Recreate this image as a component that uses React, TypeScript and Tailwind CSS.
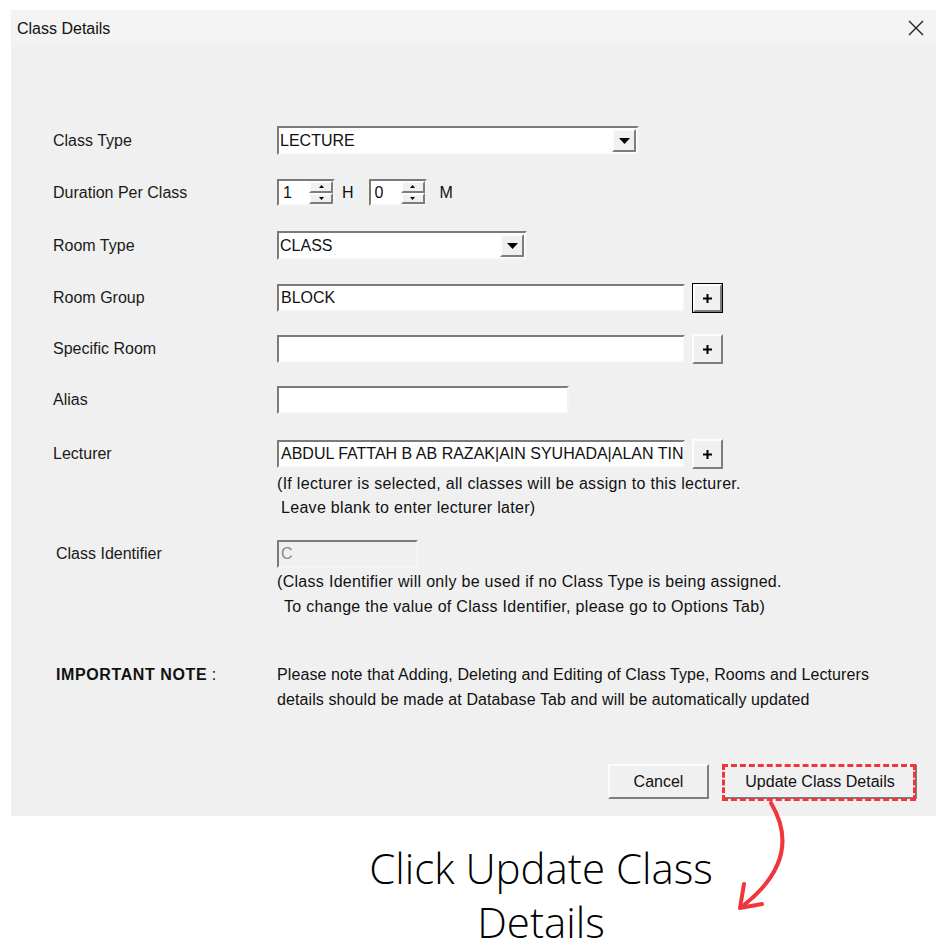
import React from "react";

const sunken =
  "border-2 border-t-[#7a7a7a] border-l-[#7a7a7a] border-b-[#f4f4f4] border-r-[#f4f4f4]";
const raised =
  "border-2 border-t-[#fcfcfc] border-l-[#fcfcfc] border-b-[#7d7d7d] border-r-[#7d7d7d] bg-[#f0f0f0]";

function Caret() {
  return (
    <svg width="11" height="6" viewBox="0 0 11 6">
      <path d="M0 0 L11 0 L5.5 6 Z" fill="#000" />
    </svg>
  );
}

function Combo({ value, width }: { value: string; width: string }) {
  return (
    <div className={`${sunken} ${width} h-[29px] bg-white flex items-center`}>
      <span className="flex-1 pl-[1px] text-[16px] leading-none text-[#111]">{value}</span>
      <div className={`${raised} w-[24px] h-[23px] mr-[1px] flex items-center justify-center`}>
        <Caret />
      </div>
    </div>
  );
}

function Spin({ value }: { value: string }) {
  return (
    <div className={`${sunken} w-[58px] h-[27px] bg-white flex items-center`}>
      <span className="flex-1 pl-[4px] text-[16px] leading-none text-[#111]">{value}</span>
      <div className="flex flex-col w-[24px] h-[23px]">
        <div className={`${raised} flex-1 flex items-center justify-center`}>
          <svg width="5" height="3" viewBox="0 0 5 3">
            <path d="M0 3 L5 3 L2.5 0 Z" fill="#000" />
          </svg>
        </div>
        <div className={`${raised} flex-1 flex items-center justify-center`}>
          <svg width="5" height="3" viewBox="0 0 5 3">
            <path d="M0 0 L5 0 L2.5 3 Z" fill="#000" />
          </svg>
        </div>
      </div>
    </div>
  );
}

function Field({ value = "", width }: { value?: string; width: string }) {
  return (
    <div className={`${sunken} ${width} h-[28px] bg-white flex items-center overflow-hidden`}>
      <span className="pl-[2px] whitespace-nowrap text-[16px] leading-none text-[#111]">{value}</span>
    </div>
  );
}

function Plus({ focused = false }: { focused?: boolean }) {
  return (
    <div className={`ml-[7px] w-[31px] h-[30px] flex ${focused ? "border border-black" : ""}`}>
      <div className={`${raised} flex-1 flex items-center justify-center`}>
        <svg width="9" height="9" viewBox="0 0 9 9">
          <path d="M4.5 0 V9 M0 4.5 H9" stroke="#000" strokeWidth="2" />
        </svg>
      </div>
    </div>
  );
}

function Row({
  label,
  top,
  indent = false,
  children,
}: {
  label: string;
  top: string;
  indent?: boolean;
  children: React.ReactNode;
}) {
  return (
    <div className={`flex items-center ${top}`}>
      <div className={`w-[224px] ${indent ? "pl-[3px]" : ""} text-[16px] text-[#1a1a1a]`}>
        {label}
      </div>
      {children}
    </div>
  );
}

export default function App() {
  return (
    <div
      className="w-[948px] h-[949px] bg-white relative overflow-hidden"
      style={{ fontFamily: '"Liberation Sans", Arial, sans-serif' }}
    >
      <div className="absolute left-[11px] top-[10px] w-[925px] h-[806px] flex flex-col">
        <div className="h-[36px] bg-[#f3f3f3] flex items-center justify-between pl-[6px] pr-[12px]">
          <span className="text-[16px] text-[#111] mt-[2px]">Class Details</span>
          <svg width="16" height="16" viewBox="0 0 16 16">
            <path d="M1 1 L15 15 M15 1 L1 15" stroke="#222" strokeWidth="1.4" />
          </svg>
        </div>
        <div className="flex-1 bg-[#f0f0f0] pl-[42px] pt-[80px] relative">
          <Row label="Class Type" top="">
            <Combo value="LECTURE" width="w-[362px]" />
          </Row>
          <Row label="Duration Per Class" top="mt-[24px]">
            <Spin value="1" />
            <span className="ml-[7px] text-[16px] text-[#111]">H</span>
            <div className="ml-[15px]">
              <Spin value="0" />
            </div>
            <span className="ml-[13px] text-[16px] text-[#111]">M</span>
          </Row>
          <Row label="Room Type" top="mt-[25px]">
            <Combo value="CLASS" width="w-[250px]" />
          </Row>
          <Row label="Room Group" top="mt-[23px]">
            <Field value="BLOCK" width="w-[408px]" />
            <Plus focused />
          </Row>
          <Row label="Specific Room" top="mt-[21px]">
            <Field width="w-[408px]" />
            <Plus />
          </Row>
          <Row label="Alias" top="mt-[22px]">
            <Field width="w-[292px]" />
          </Row>
          <Row label="Lecturer" top="mt-[25px]">
            <Field value="ABDUL FATTAH B AB RAZAK|AIN SYUHADA|ALAN TIN" width="w-[408px]" />
            <Plus />
          </Row>
          <div className="ml-[224px] mt-[3px] text-[16px] tracking-[0.3px] leading-[24px] text-[#111]">
            <div>(If lecturer is selected, all classes will be assign to this lecturer.</div>
            <div className="pl-[4px]">Leave blank to enter lecturer later)</div>
          </div>
          <Row label="Class Identifier" top="mt-[20px]" indent>
            <div className={`${sunken} w-[141px] h-[28px] bg-[#f0f0f0] flex items-center`}>
              <span className="pl-[2px] text-[16px] leading-none text-[#8a8a8a]">C</span>
            </div>
          </Row>
          <div className="ml-[224px] mt-[1px] text-[16px] tracking-[0.3px] leading-[25px] text-[#111]">
            <div>(Class Identifier will only be used if no Class Type is being assigned.</div>
            <div className="pl-[7px]">To change the value of Class Identifier, please go to Options Tab)</div>
          </div>
          <div className="flex mt-[43px]">
            <div className="w-[224px] pl-[3px] text-[16px] leading-[25px] text-[#111]">
              <span className="font-bold tracking-[0.6px]">IMPORTANT NOTE</span> :
            </div>
            <div className="text-[16px] tracking-[0.1px] leading-[25px] text-[#111]">
              <div>Please note that Adding, Deleting and Editing of Class Type, Rooms and Lecturers</div>
              <div>details should be made at Database Tab and will be automatically updated</div>
            </div>
          </div>
          <div className="absolute right-[19px] bottom-[17px] flex items-center">
            <div className={`${raised} w-[101px] h-[35px] flex items-center justify-center text-[16px] text-[#111]`}>
              Cancel
            </div>
            <div className={`${raised} ml-[14px] w-[194px] h-[35px] flex items-center justify-center text-[16px] text-[#111] relative`}>
              Update Class Details
              <div className="absolute left-[-3px] right-[-1px] top-[-2px] bottom-[-4px] border-[3px] border-dashed border-[#f0353d]" />
            </div>
          </div>
        </div>
      </div>

      <svg className="absolute left-0 top-0" width="948" height="949" viewBox="0 0 948 949">
        <path
          d="M771 803 C 790 835, 788 870, 744 905"
          fill="none"
          stroke="#f0353d"
          strokeWidth="4"
          strokeLinecap="round"
        />
        <path
          d="M744 884 L740 908 L762 904"
          fill="none"
          stroke="#f0353d"
          strokeWidth="4"
          strokeLinecap="round"
          strokeLinejoin="round"
        />
      </svg>

      <div
        className="absolute left-[280px] top-[841px] w-[522px] text-center text-[42px] leading-[54px] text-black"
        style={{ fontFamily: '"Open Sans", sans-serif', fontWeight: 300 }}
      >
        Click Update Class
        <br />
        Details
      </div>
    </div>
  );
}
